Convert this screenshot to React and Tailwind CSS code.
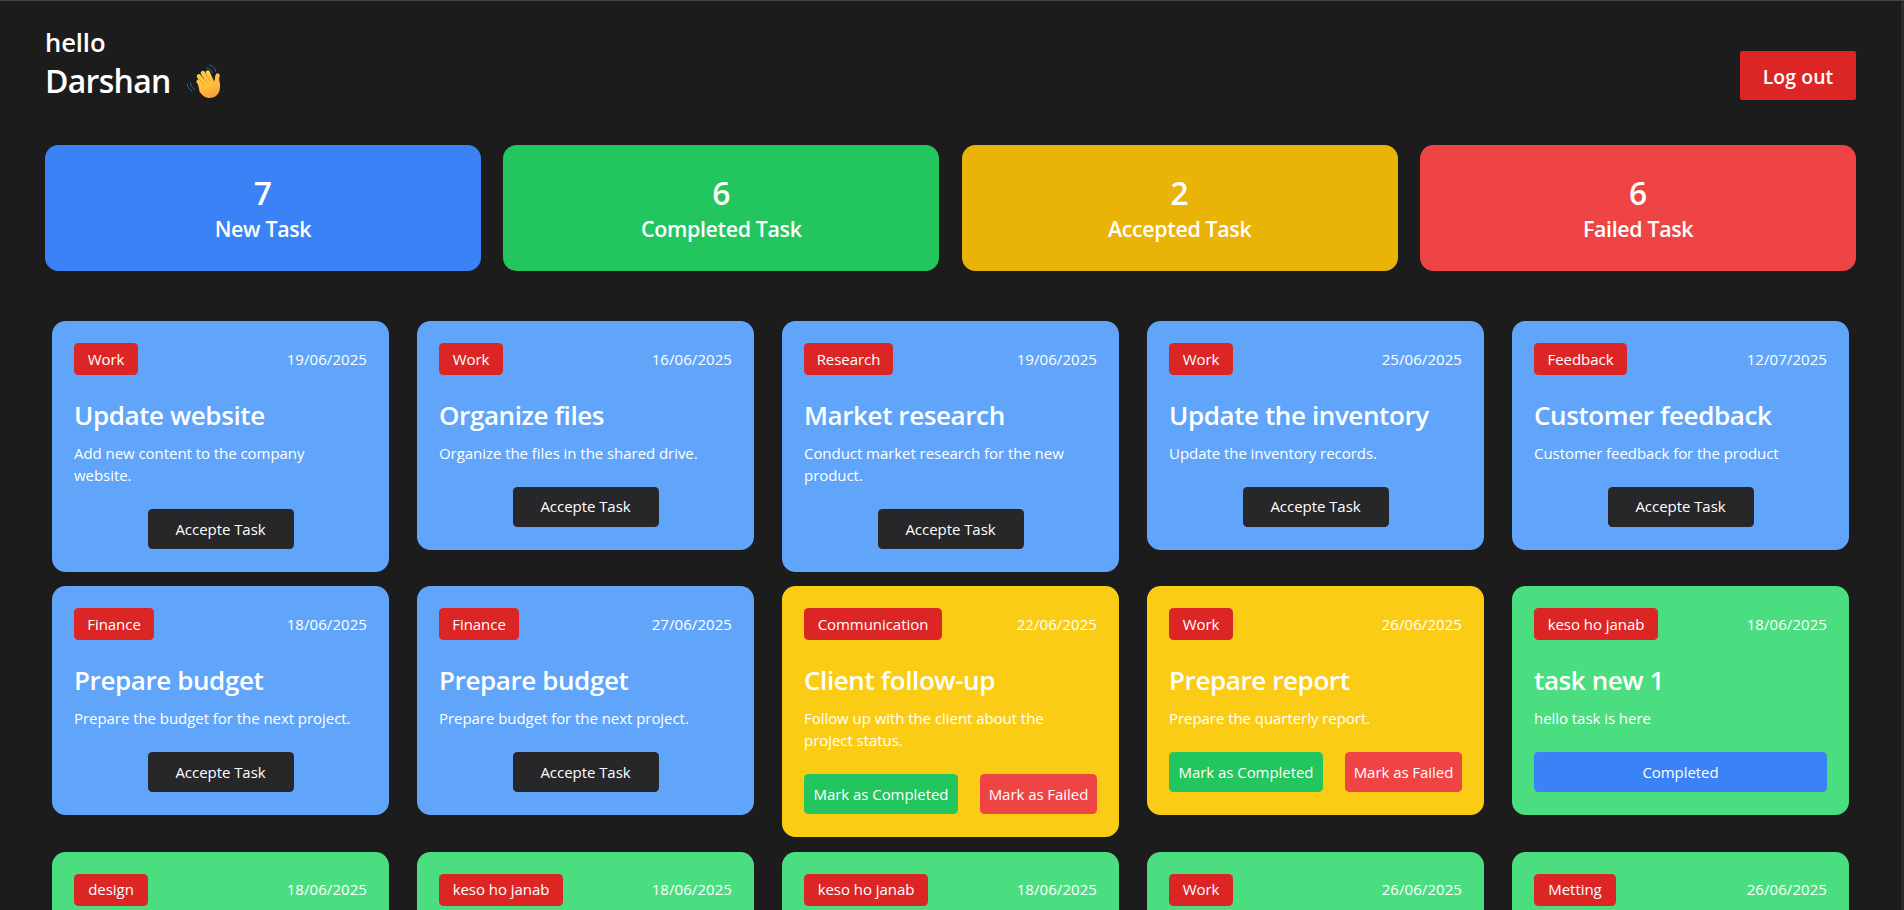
const stats = [
  { count: 7, label: "New Task", color: "bg-[#3b82f6]" },
  { count: 6, label: "Completed Task", color: "bg-[#22c55e]" },
  { count: 2, label: "Accepted Task", color: "bg-[#eab308]" },
  { count: 6, label: "Failed Task", color: "bg-[#ef4444]" },
];

const tasks = [
  { tag: "Work", w: "w-[64px]", date: "19/06/2025", title: "Update website", text: "Add new content to the company website.", state: "new" },
  { tag: "Work", w: "w-[64px]", date: "16/06/2025", title: "Organize files", text: "Organize the files in the shared drive.", state: "new" },
  { tag: "Research", w: "w-[89px]", date: "19/06/2025", title: "Market research", text: "Conduct market research for the new product.", state: "new" },
  { tag: "Work", w: "w-[64px]", date: "25/06/2025", title: "Update the inventory", text: "Update the inventory records.", state: "new" },
  { tag: "Feedback", w: "w-[93px]", date: "12/07/2025", title: "Customer feedback", text: "Customer feedback for the product", state: "new" },
  { tag: "Finance", w: "w-[80px]", date: "18/06/2025", title: "Prepare budget", text: "Prepare the budget for the next project.", state: "new" },
  { tag: "Finance", w: "w-[80px]", date: "27/06/2025", title: "Prepare budget", text: "Prepare budget for the next project.", state: "new" },
  { tag: "Communication", w: "w-[138px]", date: "22/06/2025", title: "Client follow-up", text: "Follow up with the client about the project status.", state: "active" },
  { tag: "Work", w: "w-[64px]", date: "26/06/2025", title: "Prepare report", text: "Prepare the quarterly report.", state: "active" },
  { tag: "keso ho janab", w: "w-[124px]", date: "18/06/2025", title: "task new 1", text: "hello task is here", state: "done" },
  { tag: "design", w: "w-[74px]", date: "18/06/2025", state: "done" },
  { tag: "keso ho janab", w: "w-[124px]", date: "18/06/2025", state: "done" },
  { tag: "keso ho janab", w: "w-[124px]", date: "18/06/2025", state: "done" },
  { tag: "Work", w: "w-[64px]", date: "26/06/2025", state: "done" },
  { tag: "Metting", w: "w-[82px]", date: "26/06/2025", state: "done" },
];

const cardColors = { new: "bg-[#60a5fa]", active: "bg-[#facc15]", done: "bg-[#4ade80]" };

function Wave() {
  return (
    <svg viewBox="14 24 106 106" className="ml-[15px] h-[35px] w-[35px]" fill="none" strokeLinecap="round" strokeLinejoin="round">
      <defs>
        <linearGradient id="skin" x1="60" y1="45" x2="95" y2="130" gradientUnits="userSpaceOnUse">
          <stop stopColor="#ffd04a" />
          <stop offset="0.6" stopColor="#ffbb3d" />
          <stop offset="1" stopColor="#f59a3c" />
        </linearGradient>
      </defs>
      <g stroke="#1470b8" strokeWidth="3">
        <path d="M77 36c8 0 13 5 16 14" />
        <path d="M85 28c10 0 17 7 19 18" />
        <path d="M27 80c1 9 5 16 13 21" />
        <path d="M18 85c1 9 6 16 14 21" />
      </g>
      <g stroke="url(#skin)" strokeWidth="13">
        <path d="M52 77l20 22" />
        <path d="M53 61l24 32" />
        <path d="M65 51l20 36" />
        <path d="M80 50l16 36" />
        <path d="M110 59c-5 9 0 20 0 33" />
      </g>
      <path
        d="M50 83l16-12 14-12 14 8c3 8 6 10 10 4l12 8c2 12 1 22-2 30-5 12-15 18-28 18-14 0-24-9-31-20z"
        fill="url(#skin)"
      />
      <g stroke="#df8a2c" strokeWidth="2">
        <path d="M55 71l12 14M64 61l13 18M75 54l11 20M90 62l8 15" />
      </g>
    </svg>
  );
}

function Actions({ state }) {
  const base = "flex h-[40px] items-center justify-center rounded-[4.5px]";
  if (state === "new") {
    return <button className={base + " mx-auto w-[146px] bg-[#27272a]"}>Accepte Task</button>;
  }
  if (state === "active") {
    return (
      <div className="flex justify-between">
        <button className={base + " w-[154px] bg-[#22c55e]"}>Mark as Completed</button>
        <button className={base + " w-[117px] bg-[#ef4444]"}>Mark as Failed</button>
      </div>
    );
  }
  return <button className={base + " w-full bg-[#3b82f6]"}>Completed</button>;
}

function TaskCard({ task }) {
  return (
    <article className={"min-h-[229px] w-[337px] rounded-[13.5px] px-[22px] pt-[22px] pb-[23px] " + cardColors[task.state]}>
      <div className="flex items-center justify-between">
        <span className={"flex h-[32px] items-center justify-center rounded-[4.5px] bg-[#dc2626] " + task.w}>{task.tag}</span>
        <span className="tracking-[0.07px]">{task.date}</span>
      </div>
      {task.title && (
        <>
          <h2 className="mt-[22px] text-[26px] leading-[36px] font-semibold tracking-[-0.4px]">{task.title}</h2>
          <p className="mt-[8.5px] mb-[22.5px] pr-[8px]">{task.text}</p>
          <Actions state={task.state} />
        </>
      )}
    </article>
  );
}

export default function App() {
  return (
    <div className="flex h-[910px] overflow-hidden bg-[#1c1c1c] font-['Open_Sans','Noto_Sans',sans-serif] text-[15px] leading-[22.5px] tracking-[-0.05px] whitespace-nowrap text-white">
      <main className="min-w-0 flex-1 border-t border-[#444444] px-[45px]">
        <header className="flex h-[144px] items-start justify-between">
          <div className="pt-[23px] font-semibold">
            <div className="text-[25.6px] leading-[37px] tracking-[-0.1px]">hello</div>
            <div className="flex items-center text-[32px] leading-[40px] tracking-[-0.7px]">
              Darshan
              <Wave />
            </div>
          </div>
          <button className="mt-[50px] flex h-[49px] w-[116px] items-center justify-center rounded-[2.25px] bg-[#dc2626] pt-[4px] text-[19.4px] font-semibold tracking-[0.1px]">
            Log out
          </button>
        </header>
        <section className="grid grid-cols-4 gap-[22.5px]">
          {stats.map((s) => (
            <div key={s.label} className={"flex h-[126px] flex-col items-center justify-center rounded-[13.5px] " + s.color}>
              <div className="pt-[2px] text-[31.8px] leading-[38.5px] font-semibold">{s.count}</div>
              <div className="text-[21.4px] leading-[31.5px] font-semibold tracking-[-0.35px]">{s.label}</div>
            </div>
          ))}
        </section>
        <section className="mt-[50px] grid grid-cols-[repeat(5,337px)] items-start justify-between gap-y-[14.3px] px-[7px] whitespace-normal">
          {tasks.map((t, i) => (
            <TaskCard key={i} task={t} />
          ))}
        </section>
      </main>
      <div className="w-[3px] border-t border-[#444444] bg-[#2c2c2c]" />
    </div>
  );
}
